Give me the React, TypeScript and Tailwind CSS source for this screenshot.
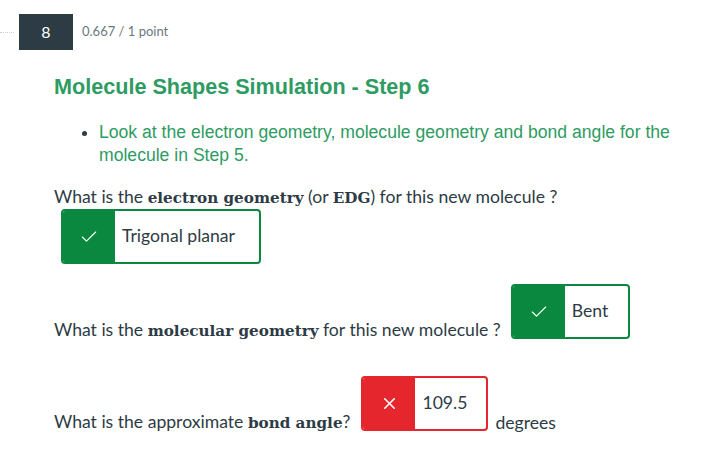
import { Check, X } from 'lucide-react'

const lato = { fontFamily: 'Lato, "Liberation Sans", sans-serif' }
const serif = { fontFamily: '"DejaVu Serif", serif' }

function Answer({ text, ok, width }: { text: string; ok: boolean; width: string }) {
  const border = ok ? 'border-[#0b883f]' : 'border-[#e6262d]'
  const bg = ok ? 'bg-[#0b883f]' : 'bg-[#e6262d]'
  return (
    <div className={`flex h-[55px] shrink-0 overflow-hidden rounded-[4px] border-2 ${border} ${width}`}>
      <div className={`flex w-[52px] shrink-0 items-center justify-center ${bg}`}>
        {ok ? (
          <Check className="h-[20px] w-[20px] text-white" strokeWidth={1.4} />
        ) : (
          <X className="h-[19px] w-[19px] text-white" strokeWidth={2} />
        )}
      </div>
      <div className="flex items-center bg-white pl-[7px] text-[17.6px] text-[#2d3b45]">{text}</div>
    </div>
  )
}

export default function App() {
  return (
    <div className="h-[449px] w-[713px] overflow-hidden bg-white" style={lato}>
      <div className="flex items-center pt-[14px]">
        <div className="w-[14px] border-t border-dotted border-[#c7cdd1]" />
        <div className="ml-[5px] flex h-[36px] w-[54px] items-center justify-center bg-[#2d3b45] text-[16px] text-white">
          8
        </div>
        <div className="ml-[9px] text-[13px] text-[#6b7780]">0.667 / 1 point</div>
      </div>

      <div className="pl-[54px]">
        <h2
          className="mt-[23px] text-[21.6px] font-bold leading-[28px] text-[#2e9b62]"
          style={{ fontFamily: '"Liberation Sans", Arial, sans-serif' }}
        >
          Molecule Shapes Simulation - Step 6
        </h2>
        <ul
          className="mt-[20px] list-disc pl-[45px] pr-[20px] text-[17.6px] leading-[23px] text-[#2e9b62] marker:text-[#2d3b45]"
          style={{ fontFamily: '"Liberation Sans", Arial, sans-serif' }}
        >
          <li>Look at the electron geometry, molecule geometry and bond angle for the molecule in Step 5.</li>
        </ul>

        <p className="mt-[18px] text-[17.6px] leading-[24px] text-[#2d3b45]">
          What is the{' '}
          <b className="text-[15.2px]" style={serif}>electron geometry</b> (or{' '}
          <b className="text-[15.2px]" style={serif}>EDG</b>) for this new molecule ?
        </p>
        <div className="ml-[7px] mt-[-1px]">
          <Answer text="Trigonal planar" ok width="w-[200px]" />
        </div>

        <div className="mt-[20px] flex items-end">
          <p className="mb-[-4px] text-[17.6px] leading-[24px] text-[#2d3b45]">
            What is the{' '}
            <b className="text-[15.2px]" style={serif}>molecular geometry</b> for this new molecule ?
          </p>
          <div className="ml-[10px]">
            <Answer text="Bent" ok width="w-[119px]" />
          </div>
        </div>

        <div className="mt-[37px] flex items-end">
          <p className="mb-[-4px] text-[17.6px] leading-[24px] text-[#2d3b45]">
            What is the approximate{' '}
            <b className="text-[15.2px]" style={serif}>bond angle</b>?
          </p>
          <div className="ml-[11px]">
            <Answer text="109.5" ok={false} width="w-[127px]" />
          </div>
          <p className="mb-[-4px] ml-[7px] text-[17.6px] leading-[24px] text-[#2d3b45]">degrees</p>
        </div>
      </div>
    </div>
  )
}
